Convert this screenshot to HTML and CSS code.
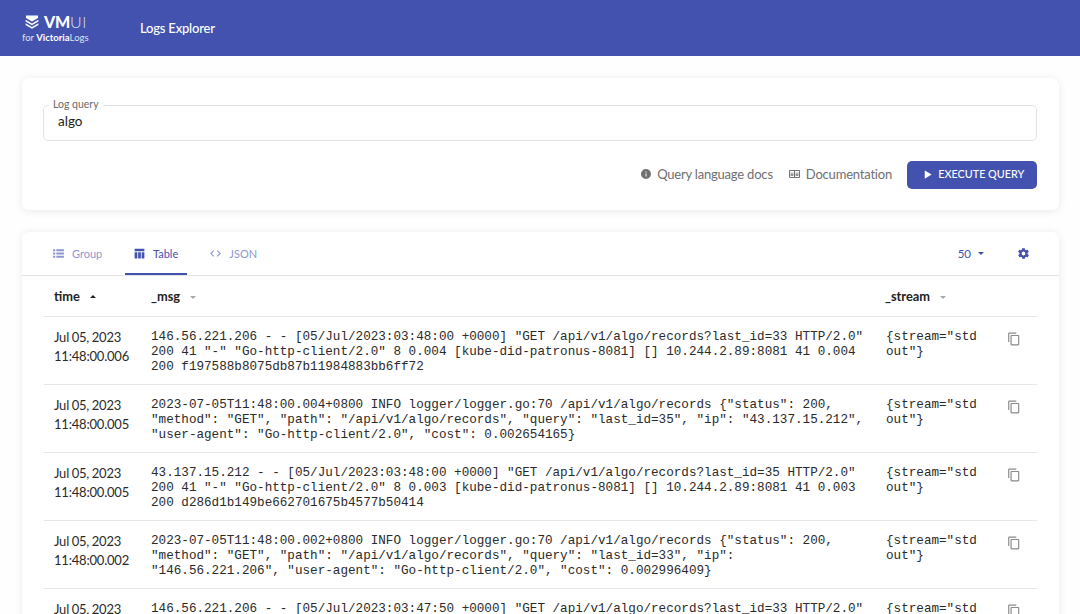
FILE: index.html
```html
<!DOCTYPE html>
<html lang="en">
<head>
<meta charset="utf-8">
<title>VMUI Logs Explorer</title>
<link rel="stylesheet" href="styles.css">
</head>
<body>
<header class="header">
  <div class="logo">
    <div class="logo-top">
      <svg class="logo-mark" viewBox="0 0 14 14"><path d="M1 .6h12v2.400L7 6.400 1 3z" fill="#fff"/><path d="M.6 4.800 7 8.500l6.400-3.700v1.700L7 10.300.6 6.500z" fill="#fff"/><path d="M.6 8.300 7 12l6.400-3.700V10L7 13.800.6 10z" fill="#fff"/></svg>
      <span class="logo-vm">VM</span><span class="logo-ui">UI</span>
    </div>
    <div class="logo-sub">for <b>Victoria</b>Logs</div>
  </div>
  <div class="header-title">Logs Explorer</div>
</header>
<main class="main">
  <section class="card query-card">
    <div class="field">
      <span class="field-label">Log query</span>
      <span class="field-value">algo</span>
    </div>
    <div class="actions">
      <a class="link"><svg class="link-icon" viewBox="0 0 24 24"><path d="M12 2a10 10 0 1 0 0 20 10 10 0 0 0 0-20zm1 15h-2v-6h2zm0-8h-2V7h2z" fill="#707070"/></svg>Query language docs</a>
      <a class="link"><svg class="link-icon link-icon-wide" viewBox="0 0 24 24"><path d="M21 4H3a2 2 0 0 0-2 2v12a2 2 0 0 0 2 2h18a2 2 0 0 0 2-2V6a2 2 0 0 0-2-2zM3 18V6h8v12zm18 0h-8V6h8zM14 9.500h6V11h-6zm0 2.500h6v1.500h-6zm0 2.500h6V16h-6zM4 9.500h6V11H4zM4 12h6v1.500H4zm0 2.500h6V16H4z" fill="#707070"/></svg>Documentation</a>
      <button class="run"><svg class="run-icon" viewBox="0 0 24 24"><path d="M6 3v18l15-9z" fill="#fff"/></svg>EXECUTE QUERY</button>
    </div>
  </section>
  <section class="card results-card">
    <div class="tabs">
      <div class="tab tab-first"><svg class="tab-icon" viewBox="0 0 24 24"><path d="M2 4h4v4H2zm6 0h14v4H8zM2 10h4v4H2zm6 0h14v4H8zM2 16h4v4H2zm6 0h14v4H8z" fill="currentColor"/></svg>Group</div>
      <div class="tab tab-active"><svg class="tab-icon" viewBox="0 0 24 24"><path d="M3 3h18v5H3zm0 6.500h5V21H4a1 1 0 0 1-1-1zm6.500 0h5V21h-5zm6.500 0h5V20a1 1 0 0 1-1 1h-4z" fill="currentColor"/></svg>Table</div>
      <div class="tab"><svg class="tab-icon" viewBox="0 0 24 24"><path d="M9.400 16.600 4.800 12l4.600-4.600L8 6l-6 6 6 6 1.400-1.400zm5.200 0 4.600-4.600-4.600-4.600L16 6l6 6-6 6-1.400-1.400z" fill="currentColor"/></svg>JSON</div>
      <div class="tabs-right">
        <span class="limit">50</span>
        <span class="caret caret-blue"></span>
        <svg class="gear" viewBox="0 0 24 24"><path d="M19.400 13a7.500 7.500 0 0 0 0-2l2.100-1.600a.5.5 0 0 0 .1-.6l-2-3.500a.5.5 0 0 0-.6-.2l-2.500 1a7.300 7.300 0 0 0-1.700-1l-.4-2.600a.5.5 0 0 0-.5-.4h-4a.5.5 0 0 0-.5.4l-.4 2.600a7.300 7.300 0 0 0-1.700 1l-2.500-1a.5.5 0 0 0-.6.2l-2 3.500a.5.5 0 0 0 .1.600L4.600 11a7.500 7.500 0 0 0 0 2l-2.100 1.600a.5.5 0 0 0-.1.600l2 3.500c.1.200.4.300.6.200l2.500-1c.5.400 1.100.7 1.700 1l.4 2.600c0 .2.200.4.500.4h4c.3 0 .5-.2.500-.4l.4-2.600c.6-.3 1.200-.6 1.700-1l2.500 1c.2.100.5 0 .6-.2l2-3.500a.5.5 0 0 0-.1-.6zM12 15.500a3.500 3.500 0 1 1 0-7 3.500 3.500 0 0 1 0 7z" fill="currentColor"/></svg>
      </div>
    </div>
    <table class="logs">
      <colgroup><col class="c-time"><col class="c-msg"><col class="c-stream"><col class="c-copy"></colgroup>
      <thead>
        <tr>
          <th>time<span class="caret caret-up"></span></th>
          <th>_msg<span class="caret caret-grey"></span></th>
          <th>_stream<span class="caret caret-grey"></span></th>
          <th></th>
        </tr>
      </thead>
      <tbody>
        <tr>
          <td class="t">Jul 05, 2023<br>11:48:00.006</td>
          <td class="m">146.56.221.206 - - [05/Jul/2023:03:48:00 +0000] "GET /api/v1/algo/records?last_id=33 HTTP/2.0" 200 41 "-" "Go-http-client/2.0" 8 0.004 [kube-did-patronus-8081] [] 10.244.2.89:8081 41 0.004 200 f197588b8075db87b11984883bb6ff72</td>
          <td class="m s">{stream="stdout"}</td>
          <td class="k"><svg class="copy" viewBox="0 0 24 24"><use href="#copy"/></svg></td>
        </tr>
        <tr>
          <td class="t">Jul 05, 2023<br>11:48:00.005</td>
          <td class="m">2023-07-05T11:48:00.004+0800 INFO logger/logger.go:70 /api/v1/algo/records {"status": 200, "method": "GET", "path": "/api/v1/algo/records", "query": "last_id=35", "ip": "43.137.15.212", "user-agent": "Go-http-client/2.0", "cost": 0.002654165}</td>
          <td class="m s">{stream="stdout"}</td>
          <td class="k"><svg class="copy" viewBox="0 0 24 24"><use href="#copy"/></svg></td>
        </tr>
        <tr>
          <td class="t">Jul 05, 2023<br>11:48:00.005</td>
          <td class="m">43.137.15.212 - - [05/Jul/2023:03:48:00 +0000] "GET /api/v1/algo/records?last_id=35 HTTP/2.0" 200 41 "-" "Go-http-client/2.0" 8 0.003 [kube-did-patronus-8081] [] 10.244.2.89:8081 41 0.003 200 d286d1b149be662701675b4577b50414</td>
          <td class="m s">{stream="stdout"}</td>
          <td class="k"><svg class="copy" viewBox="0 0 24 24"><use href="#copy"/></svg></td>
        </tr>
        <tr>
          <td class="t">Jul 05, 2023<br>11:48:00.002</td>
          <td class="m">2023-07-05T11:48:00.002+0800 INFO logger/logger.go:70 /api/v1/algo/records {"status": 200, "method": "GET", "path": "/api/v1/algo/records", "query": "last_id=33", "ip": "146.56.221.206", "user-agent": "Go-http-client/2.0", "cost": 0.002996409}</td>
          <td class="m s">{stream="stdout"}</td>
          <td class="k"><svg class="copy" viewBox="0 0 24 24"><use href="#copy"/></svg></td>
        </tr>
        <tr>
          <td class="t">Jul 05, 2023<br>11:47:50.006</td>
          <td class="m">146.56.221.206 - - [05/Jul/2023:03:47:50 +0000] "GET /api/v1/algo/records?last_id=33 HTTP/2.0" 200 41 "-" "Go-http-client/2.0" 8 0.004 [kube-did-patronus-8081] [] 10.244.2.89:8081 41 0.004 200 f197588b8075db87b11984883bb6ff72</td>
          <td class="m s">{stream="stdout"}</td>
          <td class="k"><svg class="copy" viewBox="0 0 24 24"><use href="#copy"/></svg></td>
        </tr>
      </tbody>
    </table>
  </section>
</main>
<svg class="defs" width="0" height="0"><symbol id="copy" viewBox="0 0 24 24"><path d="M16 1H4c-1.100 0-2 .9-2 2v14h2V3h12V1zm3 4H8c-1.100 0-2 .9-2 2v14c0 1.100.9 2 2 2h11c1.100 0 2-.9 2-2V7c0-1.100-.9-2-2-2zm0 16H8V7h11v14z" fill="#8a8a8a"/></symbol></svg>
</body>
</html>
```
FILE: styles.css
```css
* { box-sizing: border-box; }
html, body { margin: 0; height: 614px; overflow: hidden; }
body { background: #fefefe; font-family: "Lato", "Liberation Sans", sans-serif; color: #1f1f1f; }
.defs { position: absolute; }

.header { height: 56px; background: #4252ae; color: #fff; display: flex; align-items: center; padding-left: 22px; }
.logo { width: 118px; display: flex; flex-direction: column; align-items: flex-start; }
.logo-top { display: flex; align-items: center; padding-left: 3px; height: 18px; font-size: 16px; line-height: 18px; }
.logo-mark { width: 14px; height: 14px; margin-right: 5px; }
.logo-vm { font-weight: 900; letter-spacing: -0.2px; }
.logo-ui { font-weight: 300; opacity: .8; letter-spacing: .5px; }
.logo-sub { font-size: 9.500px; line-height: 12px; margin-top: 1px; color: #dfe2f2; }
.logo-sub b { font-weight: 700; color: #fff; }
.header-title { font-size: 13px; letter-spacing: -.2px; font-weight: 500; }

.main { padding: 22px 21px 0 22px; display: flex; flex-direction: column; gap: 22px; }
.card { background: #fff; border-radius: 7px; box-shadow: 0 1px 8px rgba(0,0,0,.09); }
.query-card { height: 132px; padding: 27px 22px 0 21px; }
.field { position: relative; height: 36px; border: 1px solid #e3e3e3; border-radius: 5px; padding: 0 14px 4px; display: flex; align-items: center; font-size: 13.500px; }
.field-label { position: absolute; left: 5px; top: -8px; padding: 0 4px; background: #fff; font-size: 10.500px; line-height: 12px; color: #6a6a6a; }
.field-value { color: #222; }
.actions { margin-top: 20px; height: 28px; display: flex; justify-content: flex-end; align-items: center; }
.link { display: flex; align-items: center; font-size: 13px; letter-spacing: -.2px; color: #6f6f6f; margin-right: 15px; padding-bottom: 2px; }
.link-icon { width: 12px; height: 12px; margin-right: 5px; }
.link-icon-wide { width: 13px; margin-right: 5px; }
.run { width: 130px; height: 28px; border: 0; border-radius: 5px; background: #4252ae; color: #fff; font: 500 10.800px "Lato", sans-serif; display: flex; align-items: center; justify-content: center; padding: 0 0 3px 2px; }
.run-icon { width: 11px; height: 11px; margin-right: 5.500px; margin-top: 2px; }

.results-card { height: 400px; padding: 0 22px 0 0; }
.tabs { height: 44px; margin-right: -22px; border-bottom: 1px solid #e3e3e3; display: flex; padding-left: 22px; font-size: 11px; gap: 14px; }
.tab { height: 43px; padding: 0 8px; display: flex; align-items: center; gap: 7px; color: #8e96cd; }
.tab-first { width: 67px; }
.tab-icon { width: 13px; height: 13px; }
.tab-active { padding-right: 9px; color: #4252ae; border-bottom: 2px solid #4252ae; padding-top: 2px; }
.tabs-right { margin-left: auto; display: flex; align-items: center; padding-right: 29px; color: #4252ae; }
.limit { font-size: 11.500px; }
.caret { display: inline-block; width: 0; height: 0; border-left: 3px solid transparent; border-right: 3px solid transparent; border-top: 3px solid #888; }
.caret-blue { border-top-color: #4252ae; margin: 0 0 0 7px; }
.gear { width: 13px; height: 13px; margin-left: 33px; }

.logs { margin-left: 22px; width: 993px; border-collapse: collapse; table-layout: fixed; }
.c-time { width: 107px; }
.c-msg { width: 724px; }
.c-stream { width: 110px; }
.c-copy { width: 52px; }
.logs th { height: 40px; text-align: left; font-size: 12.800px; font-weight: 700; color: #222; padding: 0 0 0 10px; border-bottom: 1px solid #e7e7e7; }
.logs th:nth-child(2) { padding-left: 0; }
.logs th:nth-child(3) { padding-left: 10px; }
.caret-up { border-top: 0; border-bottom: 3px solid #222; margin: 0 0 2px 10px; vertical-align: middle; }
.caret-grey { border-top-color: #aaa; margin: 0 0 0 10px; vertical-align: middle; }
.logs td { height: 68px; border-bottom: 1px solid #e7e7e7; vertical-align: top; }
.t { padding: 11px 0 0 10px; font-size: 13px; letter-spacing: -.2px; word-spacing: -.5px; line-height: 19.500px; color: #2a2a2a; }
.m { padding: 12px 8px 0 0; font-family: "Liberation Mono", "DejaVu Sans Mono", monospace; font-size: 12.640px; line-height: 15px; color: #2a2a2a; word-break: break-word; }
.logs .s { padding: 12px 4px 0 11px; word-break: break-all; }
.k { padding: 15px 0 0 22px; }
.copy { width: 14px; height: 14px; display: block; }
```
